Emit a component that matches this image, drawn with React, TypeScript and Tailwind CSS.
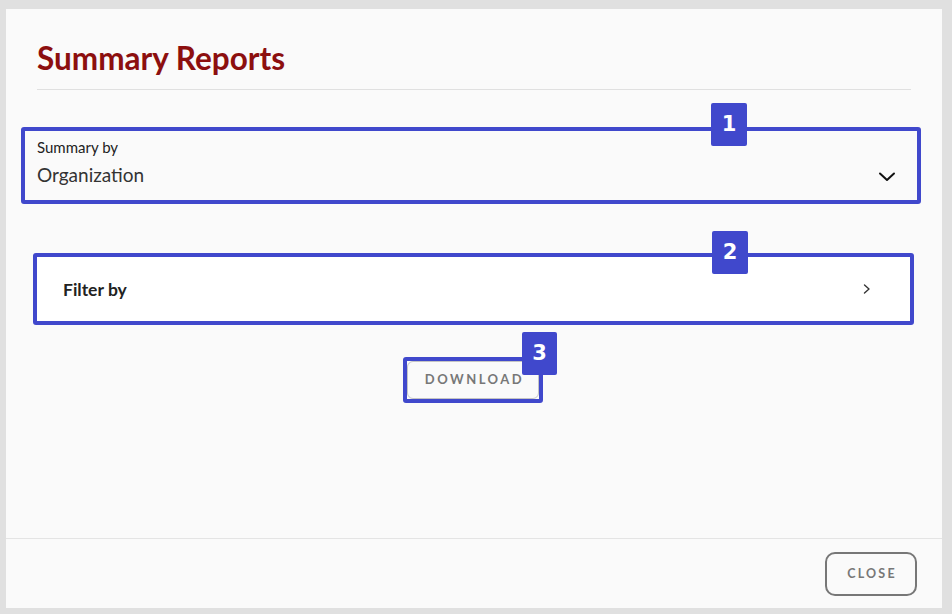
function Badge({ n, className }: { n: string; className: string }) {
    return (
        <div
            className={`absolute flex items-center justify-center bg-[#4048cc] rounded-[2px] text-white font-bold text-[21px] ${className}`}
            style={{ fontFamily: '"DejaVu Sans", sans-serif' }}
        >
            {n}
        </div>
    )
}

export default function App() {
    return (
        <div className="w-[952px] h-[614px] bg-[#e0e0e0] pt-[9px] pl-[6px] font-['Lato',sans-serif]">
            <div className="w-[936px] h-[599px] bg-[#fafafa] flex flex-col">
                <div className="flex-1 flex flex-col">
                    {/* header */}
                    <div className="mx-[31px] pt-[30px] pb-[12px] border-b border-[#e0e0e0]">
                        <h1 className="text-[31.5px] leading-[38px] font-bold text-[#8c0f0f]">Summary Reports</h1>
                    </div>

                    {/* 1: summary by select */}
                    <div className="relative mt-[37px] ml-[15px] mr-[21px] border-4 border-[#4048cc] rounded-[3px]">
                        <div className="flex items-end justify-between pl-[12px] pr-[21px] pt-[7px] pb-[14px]">
                            <div className="flex flex-col gap-[7px]">
                                <span className="text-[15px] leading-[18px] text-[#222]">Summary by</span>
                                <span className="text-[19px] leading-[23px] text-[#333]">Organization</span>
                            </div>
                            <svg width="18" height="10" viewBox="0 0 18 10" className="mb-[4px]" fill="none" stroke="#111" strokeWidth="2" strokeLinecap="round" strokeLinejoin="round">
                                <polyline points="2,1.5 9,8 16,1.5" />
                            </svg>
                        </div>
                        <Badge n="1" className="top-[-28px] right-[170px] w-[36px] h-[43px]" />
                    </div>

                    {/* 2: filter by accordion */}
                    <div className="relative mt-[49px] ml-[27px] mr-[28px] border-4 border-[#4048cc] rounded-[3px]">
                        <div className="h-[64px] bg-white flex items-center justify-between pl-[26px] pr-[39px]">
                            <span className="text-[17.5px] leading-[21px] font-bold text-[#222]">Filter by</span>
                            <svg width="8" height="10" viewBox="0 0 8 10" fill="none" stroke="#333" strokeWidth="1.4" strokeLinecap="round" strokeLinejoin="round">
                                <polyline points="1.5,1 6,5 1.5,9" />
                            </svg>
                        </div>
                        <Badge n="2" className="top-[-26px] right-[162px] w-[36px] h-[43px]" />
                    </div>

                    {/* 3: download */}
                    <div className="mt-[32px] flex justify-center">
                        <div className="relative border-4 border-[#4048cc] rounded-[3px] ml-[-2px]">
                            <button className="w-[132px] h-[38px] border border-[#c4c4c4] rounded-[6px] bg-[#fafafa] text-[13px] font-bold tracking-[2.5px] text-[#777] pl-[3px]">
                                DOWNLOAD
                            </button>
                            <Badge n="3" className="top-[-29px] left-[115px] w-[35px] h-[43px]" />
                        </div>
                    </div>
                </div>

                {/* footer */}
                <div className="h-[70px] border-t border-[#e4e4e4] flex justify-end pt-[13px] pr-[25px]">
                    <button className="w-[92px] h-[44px] border-2 border-[#777] rounded-[10px] text-[12.5px] font-bold tracking-[2.2px] text-[#777] pl-[2px]">
                        CLOSE
                    </button>
                </div>
            </div>
        </div>
    )
}
